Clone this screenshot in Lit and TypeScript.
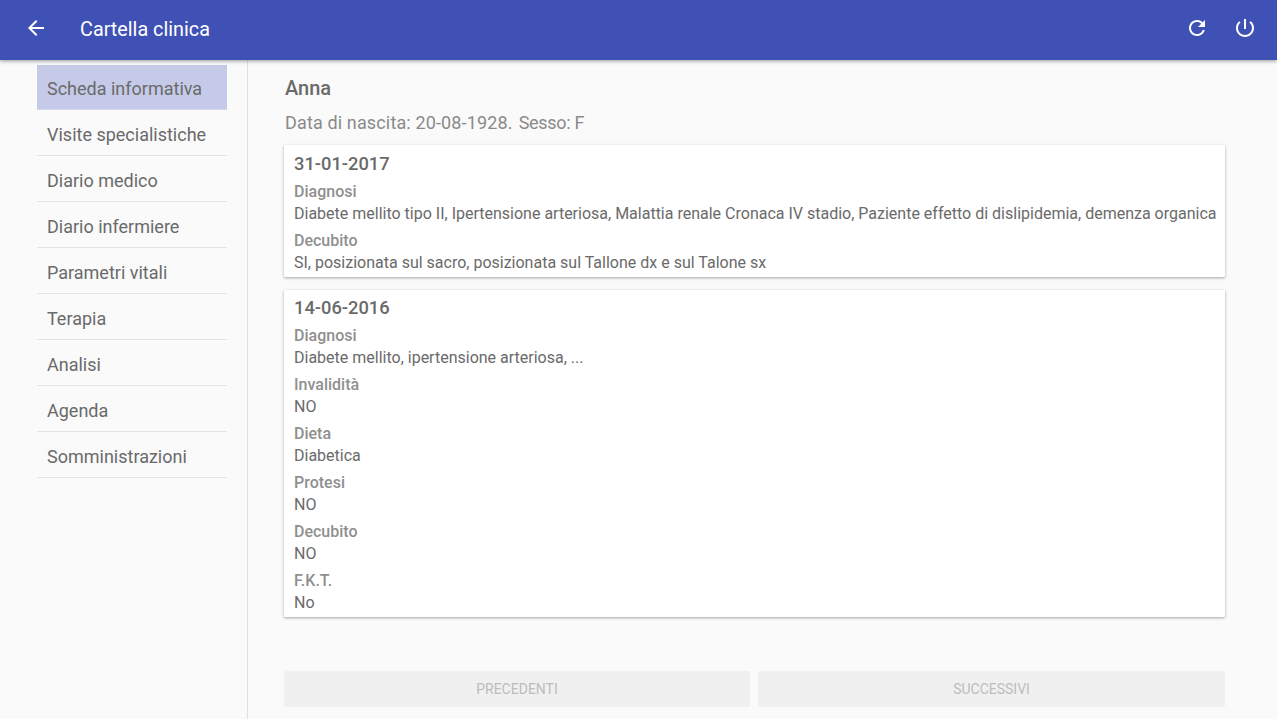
import { LitElement, html, css } from "lit";
import { customElement } from "lit/decorators.js";

const NAV = ["Scheda informativa","Visite specialistiche","Diario medico","Diario infermiere","Parametri vitali","Terapia","Analisi","Agenda","Somministrazioni"];
const CARDS = [
  { date: "31-01-2017", fields: [
    ["Diagnosi","Diabete mellito tipo II, Ipertensione arteriosa, Malattia renale Cronaca IV stadio, Paziente effetto di dislipidemia, demenza organica"],
    ["Decubito","SI, posizionata sul sacro, posizionata sul Tallone dx e sul Talone sx"],
  ]},
  { date: "14-06-2016", fields: [
    ["Diagnosi","Diabete mellito, ipertensione arteriosa, ..."],
    ["Invalidità","NO"],["Dieta","Diabetica"],["Protesi","NO"],["Decubito","NO"],["F.K.T.","No"],
  ]},
];

@customElement("app-root")
export class AppRoot extends LitElement {
  static styles = css`
    :host { display: flex; flex-direction: column; width: 1277px; height: 719px; overflow: hidden; background: #fafafa; font-family: Roboto, sans-serif; color: #6a6a6a; }
    .bar { height: 60px; flex: none; background: #3f51b5; color: #fff; display: flex; align-items: center; box-shadow: 0 1px 4px rgba(0,0,0,.4); position: relative; z-index: 2; }
    .back { width: 24px; height: 24px; margin-left: 24px; margin-top: -4px; }
    .title { margin-left: 32px; font-size: 19.8px; flex: 1; margin-top: -2px; }
    .ic { width: 24px; height: 24px; margin-top: -4px; }
    .ic.r { margin-right: 24px; }
    .ic.p { margin-right: 20px; }
    .main { flex: 1; display: flex; min-height: 0; }
    .side { flex: none; border-right: 1px solid #e0e0e0; padding: 5px 20.5px 0 37px; width: 189.5px; }
    .item { height: 42px; padding-top: 3px; border-bottom: 1px solid #e4e4e4; padding-left: 10px; display: flex; align-items: center; font-size: 18px; color: #6a6a6a; }
    .item.on { background: #c5cae9; border-bottom-color: #d5d9ee; padding-top: 2px; }
    .content { flex: 1; padding: 0 52px 0 37px; min-width: 0; display: flex; flex-direction: column; }
    .name { font-weight: 500; font-size: 20px; line-height: 25px; margin-top: 16px; }
    .dob { font-size: 18px; line-height: 24px; margin-top: 9.5px; color: #8a8a8a; margin-bottom: 10.9px; }
    .dob .a { letter-spacing: .14px; }
    .dob .b { letter-spacing: -.3px; margin-left: 6px; }
    .card { background: #fff; box-shadow: 0 1px 3px rgba(0,0,0,.35); padding: 5.5px 10px 3px; margin-left: -1px; margin-bottom: 12.9px; border-radius: 1px; }
    .date { font-size: 18.3px; font-weight: 500; line-height: 25px; }
    .label { font-size: 16px; font-weight: 500; color: #8f8f8f; line-height: 22px; margin-top: 5px; }
    .value { font-size: 16px; line-height: 22px; color: #6a6a6a; white-space: nowrap; }
    .btns { display: flex; gap: 8px; margin: 40.8px 0 0 -1px; }
    .btn { flex: 1; height: 36px; background: #f0f0f0; border-radius: 2px; color: #bdbdbd; font-size: 14px; display: flex; align-items: center; justify-content: center; }
    .btn.first { flex: 0 0 466px; }
  `;
  render() {
    return html`
      <div class="bar">
        <svg class="back" viewBox="0 0 24 24" fill="#fff"><path d="M20 11H7.83l5.59-5.59L12 4l-8 8 8 8 1.41-1.41L7.83 13H20v-2z"/></svg>
        <div class="title">Cartella clinica</div>
        <svg class="ic r" viewBox="0 0 24 24" fill="#fff"><path d="M17.65 6.35A7.958 7.958 0 0 0 12 4c-4.42 0-7.99 3.58-7.99 8s3.57 8 7.99 8c3.73 0 6.84-2.55 7.73-6h-2.08A5.99 5.99 0 0 1 12 18c-3.31 0-6-2.69-6-6s2.69-6 6-6c1.66 0 3.14.69 4.22 1.78L13 11h7V4l-2.35 2.35z"/></svg>
        <svg class="ic p" viewBox="0 0 24 24" fill="#fff"><path d="M13 3h-2v10h2V3zm4.83 2.17l-1.42 1.42A6.92 6.92 0 0 1 19 12c0 3.87-3.13 7-7 7s-7-3.13-7-7c0-2.22 1.03-4.2 2.58-5.42L6.17 5.17A8.932 8.932 0 0 0 3 12c0 4.97 4.03 9 9 9s9-4.03 9-9c0-2.74-1.23-5.19-3.17-6.83z"/></svg>
      </div>
      <div class="main">
        <div class="side">
          ${NAV.map((n, i) => html`<div class="item ${i === 0 ? "on" : ""}">${n}</div>`)}
        </div>
        <div class="content">
          <div class="name">Anna</div>
          <div class="dob"><span class="a">Data di nascita: 20-08-1928.</span><span class="b">Sesso: F</span></div>
          ${CARDS.map(c => html`<div class="card">
            <div class="date">${c.date}</div>
            ${c.fields.map(f => html`<div class="label">${f[0]}</div><div class="value">${f[1]}</div>`)}
          </div>`)}
          <div class="btns"><div class="btn first">PRECEDENTI</div><div class="btn">SUCCESSIVI</div></div>
        </div>
      </div>
    `;
  }
}
